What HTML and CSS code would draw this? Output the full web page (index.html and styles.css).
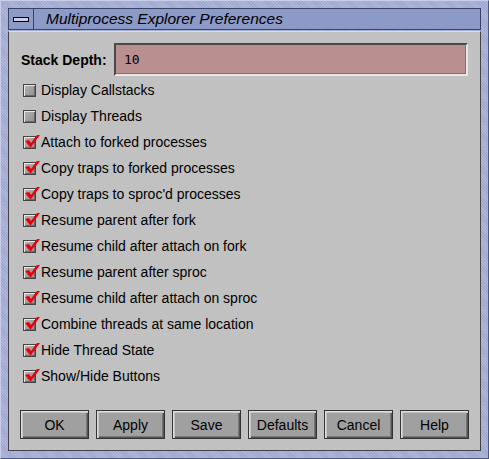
FILE: index.html
```html
<!DOCTYPE html>
<html>
    <head>
        <meta charset="utf-8">
        <title>Multiprocess Explorer Preferences</title>
        <link rel="stylesheet" href="styles.css">
    </head>
    <body>
        <div class="frame">
            <div class="titlebar">
                <div class="menubtn"><span class="dash"></span></div>
                <div class="title">Multiprocess Explorer Preferences</div>
            </div>
            <div class="client">
                <div class="field-row">
                    <label class="field-label" for="depth">Stack Depth:</label>
                    <div class="field"><span>10</span></div>
                </div>
                <div class="checks">
                    <div class="check"><span class="box"></span>Display Callstacks</div>
                    <div class="check"><span class="box"></span>Display Threads</div>
                    <div class="check on"><span class="box"></span>Attach to forked processes</div>
                    <div class="check on"><span class="box"></span>Copy traps to forked processes</div>
                    <div class="check on"><span class="box"></span>Copy traps to sproc'd processes</div>
                    <div class="check on"><span class="box"></span>Resume parent after fork</div>
                    <div class="check on"><span class="box"></span>Resume child after attach on fork</div>
                    <div class="check on"><span class="box"></span>Resume parent after sproc</div>
                    <div class="check on"><span class="box"></span>Resume child after attach on sproc</div>
                    <div class="check on"><span class="box"></span>Combine threads at same location</div>
                    <div class="check on"><span class="box"></span>Hide Thread State</div>
                    <div class="check on"><span class="box"></span>Show/Hide Buttons</div>
                </div>
                <div class="buttons">
                    <div class="btn">OK</div>
                    <div class="btn">Apply</div>
                    <div class="btn">Save</div>
                    <div class="btn">Defaults</div>
                    <div class="btn">Cancel</div>
                    <div class="btn">Help</div>
                </div>
            </div>
        </div>
    </body>
</html>
```

FILE: styles.css
```css
*{box-sizing:border-box;}
body,html{
    margin:0;
    width:489px;
    height:459px;
    font-family:"Liberation Sans", Arial, sans-serif;
    color:#000;
}
.frame{
    width:489px;
    height:459px;
    padding:7px 7px 7px 7px;
    background-color:#9ea8d2;
    background-image:repeating-linear-gradient(45deg, rgba(255,255,255,0.18) 0 1px, transparent 1px 2px);
    border-top:1px solid #c8cee8;
    border-left:1px solid #c8cee8;
    border-right:1px solid #50587a;
    border-bottom:1px solid #50587a;
    display:flex;
    flex-direction:column;
}
.titlebar{
    height:22px;
    display:flex;
    background:#8c9ac8;
    border:1px solid #3c4262;
}
.menubtn{
    width:25px;
    border-right:1px solid #3c4262;
    display:flex;
    align-items:center;
    justify-content:center;
}
.dash{
    width:16px;
    height:5px;
    border:1px solid #000;
    background:#c8cee8;
}
.title{
    padding-left:12px;
    font-size:15.5px;
    font-style:italic;
    line-height:20px;
}
.client{
    flex:1;
    background:#c1c1c1;
    border:1px solid #444;
    border-top-color:#dcdcdc;
    margin-top:1px;
    padding:11px 11px 0 11px;
    display:flex;
    flex-direction:column;
}
.field-row{display:flex; align-items:center; gap:2px;}
.field-label{font-weight:bold; font-size:14px; width:92px; text-align:left; padding-left:1px;}
.field{
    flex:1;
    height:33px;
    margin-right:1px;
    background:#b98f8f;
    border:2px solid #4a4a4a;
    border-right-color:#e6e6e6;
    border-bottom-color:#e6e6e6;
    box-shadow:inset -1px -1px 0 #8f6d6d;
    padding-left:8px;
    display:flex;
    align-items:center;
    font-family:"DejaVu Sans Mono", monospace;
    font-size:13px;
}
.checks{display:flex; flex-direction:column; margin-top:1px;}
.check{
    height:26px;
    display:flex;
    align-items:center;
    font-size:14px;
    padding-left:3px;
}
.box{
    width:13px;
    height:13px;
    margin-right:5px;
    background:linear-gradient(135deg, #b4b4b4, #909090);
    border:1px solid #444;
    box-shadow:inset 1px 1px 0 #e8e8e8, inset -1px -1px 0 #6a6a6a;
    position:relative;
}
.check.on .box::after{
    content:"";
    position:absolute;
    left:1px;
    top:-3px;
    width:15px;
    height:14px;
    background:url("data:image/svg+xml;utf8,<svg xmlns='http://www.w3.org/2000/svg' width='15' height='14'><path d='M0 7 L4 6 L6 9 L12 1 L15 1 L6 13 L5 13 Z' fill='%23e8000c'/></svg>") no-repeat;
}
.buttons{
    margin-top:auto;
    margin-bottom:11px;
    display:flex;
    gap:7px;
}
.btn{
    width:69px;
    height:29px;
    background:#a0a0a0;
    border:1px solid #333;
    box-shadow:inset 1px 1px 0 #e0e0e0, inset 2px 2px 0 #c4c4c4, inset -1px -1px 0 #555, inset -2px -2px 0 #777;
    display:flex;
    align-items:center;
    justify-content:center;
    font-size:14px;
}
```
